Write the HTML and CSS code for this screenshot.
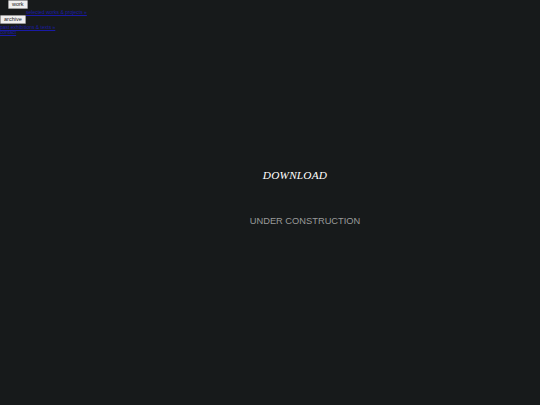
FILE: index.html
```html
<!DOCTYPE html>
<html>
<head>
<meta charset="utf-8">
<link rel="stylesheet" href="styles.css">
</head>
<body>
<nav class="nav">
  <div class="row indent"><button class="btn">work</button></div>
  <div class="row indent2"><a class="lnk" href="#">selected works &amp; projects &raquo;</a></div>
  <div class="row tall"><button class="btn">archive</button></div>
  <div class="row"><a class="lnk" href="#">past exhibitions &amp; texts &raquo;</a></div>
  <div class="row"><a class="lnk" href="#">contact</a></div>
</nav>
<main class="main">
  <h1 class="title">DOWNLOAD</h1>
  <p class="sub">UNDER CONSTRUCTION</p>
</main>
</body>
</html>
```
FILE: styles.css
```css
html, body {
  margin: 0;
  padding: 0;
  background: #171a1b;
  height: 100%;
}
body {
  font-family: "Liberation Sans", Arial, sans-serif;
  position: relative;
}
.nav {
  display: flex;
  flex-direction: column;
  align-items: flex-start;
  font-size: 5px;
  line-height: 5px;
}
.indent { padding-left: 8px; height: 10px; }
.indent2 { padding-left: 26px; height: 5px; }
.tall { height: 10px; }
.btn {
  display: block;
  font-family: "Liberation Sans", Arial, sans-serif;
  font-size: 5.5px;
  line-height: 5px;
  padding: 1px 3px;
  margin: 0;
  background: #efefef;
  color: #222;
  border: 1px solid #999;
  border-radius: 1px;
  height: 9px;
}
.lnk {
  color: #1a1aa6;
  text-decoration: underline;
  font-size: 5px;
  line-height: 5px;
}
.main {
  position: absolute;
  left: 50px;
  right: 0;
  top: 166px;
  display: flex;
  flex-direction: column;
  align-items: center;
}
.title {
  margin: 0;
  font-family: "Liberation Serif", "Times New Roman", serif;
  font-style: italic;
  font-weight: normal;
  font-size: 11.3px;
  line-height: 18px;
  color: #ffffff;
  letter-spacing: 0.2px;
}
.sub {
  margin: 31px 0 0 20px;
  font-size: 9.3px;
  line-height: 12px;
  color: #9a9a9a;
}
```
